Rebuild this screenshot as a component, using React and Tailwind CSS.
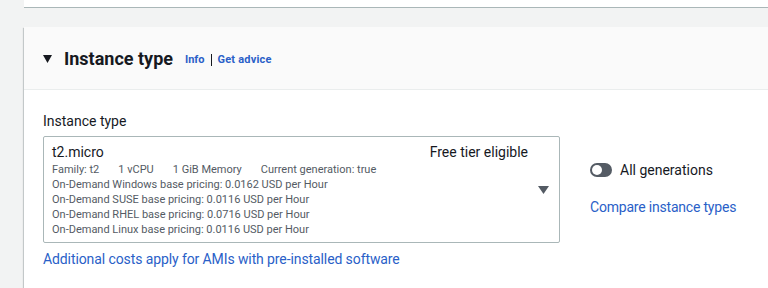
import React, { useState } from 'react';

const pricing = [
    'On-Demand Windows base pricing: 0.0162 USD per Hour',
    'On-Demand SUSE base pricing: 0.0116 USD per Hour',
    'On-Demand RHEL base pricing: 0.0716 USD per Hour',
    'On-Demand Linux base pricing: 0.0116 USD per Hour',
];

const Toggle = ({ checked, onChange }) => (
    <button
        onClick={() => onChange(!checked)}
        className={`relative w-[22px] h-[14px] rounded-full ${checked ? 'bg-[#0073bb]' : 'bg-[#545b64]'}`}
    >
        <span
            className={`absolute top-[2px] w-[10px] h-[10px] rounded-full bg-white ${checked ? 'left-[10px]' : 'left-[2px]'}`}
        />
    </button>
);

const App = () => {
    const [allGenerations, setAllGenerations] = useState(false);

    return (
        <div className="w-[768px] h-[288px] overflow-hidden bg-[#f2f3f3] pl-6 font-['Roboto',sans-serif] text-[#16191f]">
            {/* previous panel */}
            <div className="h-[8px] bg-white border-b border-[#aab7b8]" />

            {/* Instance type panel */}
            <div className="mt-[19px] bg-white shadow-[0_1px_1px_0_rgba(0,28,36,0.3),-1px_1px_1px_0_rgba(0,28,36,0.15)]">
                <div className="h-[63px] bg-[#fafafa] border-b border-[#eaeded] flex items-center pl-[19px] pt-[1px]">
                    <svg width="9" height="8" viewBox="0 0 9 8" className="mr-[12px]">
                        <path d="M0 0 H9 L4.5 8 Z" fill="#16191f" />
                    </svg>
                    <h2 className="text-[18px] font-bold leading-none">Instance type</h2>
                    <span className="ml-[12px] mt-[3px] text-[11px] font-bold text-[#2a5fc8]">Info</span>
                    <span className="ml-[6px] mr-[6px] mt-[3px] w-[1px] h-[12px] bg-[#16191f]" />
                    <span className="mt-[3px] text-[11px] font-bold text-[#2a5fc8] tracking-[0.2px]">Get advice</span>
                </div>

                <div className="pl-[19px] pt-[22px] pb-[22px] flex gap-[30px]">
                    <div className="w-[517px]">
                        <div className="text-[14px] leading-[18px] mb-[6px]">Instance type</div>
                        <div className="border border-[#aab7b8] rounded-[2px] pl-[8px] pr-[10px] pt-[6px] pb-[5px] flex">
                            <div className="flex-1">
                                <div className="flex justify-between text-[14px] leading-[18px] pr-[8px]">
                                    <span>t2.micro</span>
                                    <span>Free tier eligible</span>
                                </div>
                                <div className="mt-[1px] text-[11px] leading-[15px] text-[#545b64]">
                                    <div className="flex gap-[19px]">
                                        <span>Family: t2</span>
                                        <span>1 vCPU</span>
                                        <span>1 GiB Memory</span>
                                        <span>Current generation: true</span>
                                    </div>
                                    {pricing.map((p) => (
                                        <div key={p}>{p}</div>
                                    ))}
                                </div>
                            </div>
                            <div className="flex items-center pl-[2px]">
                                <svg width="11" height="8" viewBox="0 0 11 8">
                                    <path d="M0 0 H11 L5.5 8 Z" fill="#545b64" />
                                </svg>
                            </div>
                        </div>
                        <div className="mt-[7px] text-[14px] leading-[18px] text-[#2a5fc8] tracking-[-0.1px]">
                            Additional costs apply for AMIs with pre-installed software
                        </div>
                    </div>

                    <div className="pt-[49px]">
                        <div className="flex items-center gap-[8px]">
                            <Toggle checked={allGenerations} onChange={setAllGenerations} />
                            <span className="text-[14px] leading-[18px]">All generations</span>
                        </div>
                        <div className="mt-[19px] text-[14px] leading-[18px] text-[#2a5fc8] tracking-[-0.2px]">Compare instance types</div>
                    </div>
                </div>
            </div>
        </div>
    );
};

export default App;
